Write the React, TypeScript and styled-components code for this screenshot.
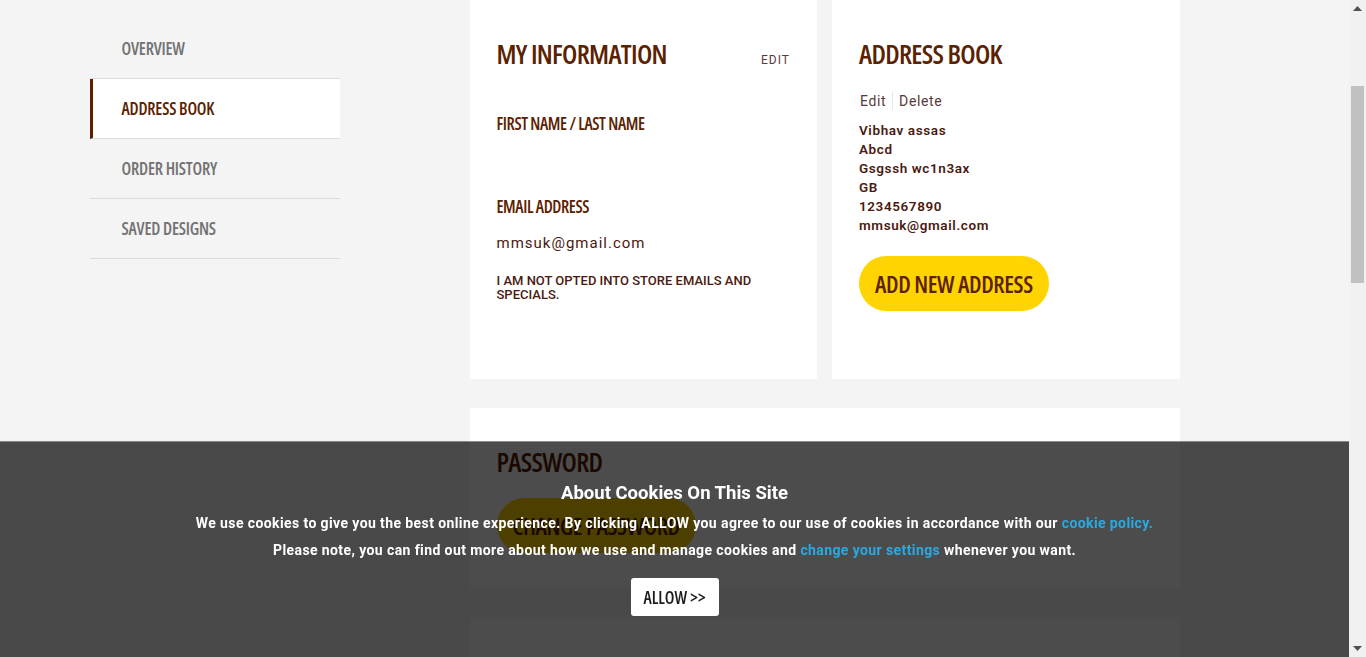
import React, { useLayoutEffect, useRef } from 'react';
import styled, { createGlobalStyle } from 'styled-components';

const brown = '#5b2100';
const deepBrown = '#4a1a10';

const GlobalStyle = createGlobalStyle`
  html, body {
    margin: 0;
    padding: 0;
    height: 100%;
    overflow: hidden;
    background: #f4f4f4;
  }
  body {
    font-family: Roboto, "Liberation Sans", sans-serif;
    color: ${deepBrown};
  }
  * { box-sizing: border-box; }
`;

const condensed = `
  font-family: "Open Sans", "Liberation Sans Narrow", sans-serif;
  font-stretch: 75%;
  text-transform: uppercase;
`;

const Shell = styled.div`
  display: flex;
  height: 100vh;
`;

const Viewport = styled.div`
  flex: 1;
  min-width: 0;
  overflow-y: scroll;
  scrollbar-width: none;
`;

const ScrollRail = styled.div`
  width: 17px;
  flex: none;
  background: #f1f1f1;
  display: flex;
  flex-direction: column;
  align-items: center;
`;

const RailArrow = styled.div`
  height: 17px;
  width: 17px;
  display: flex;
  align-items: center;
  justify-content: center;
`;

const RailTrack = styled.div`
  flex: 1;
  width: 100%;
  padding: 69px 2px 0;
`;

const RailThumb = styled.div`
  height: 197px;
  background: #c1c1c1;
`;

const Page = styled.div`
  min-height: 2078px;
  padding-top: 230px;
`;

const Container = styled.div`
  width: 1170px;
  margin: 0 auto;
  display: grid;
  grid-template-columns: 250px 710px;
  column-gap: 130px;
  align-items: start;
`;

const SideNav = styled.nav`
  margin-top: 19px;
  display: flex;
  flex-direction: column;
`;

const NavItem = styled.a<{ $active?: boolean }>`
  ${condensed}
  display: flex;
  align-items: center;
  height: 60px;
  padding-left: ${p => (p.$active ? '29px' : '32px')};
  border-bottom: 1px solid #dcdcdc;
  border-left: ${p => (p.$active ? `3px solid ${brown}` : 'none')};
  background: ${p => (p.$active ? '#fff' : 'transparent')};
  color: ${p => (p.$active ? brown : '#727272')};
  font-size: 17px;
  font-weight: 600;
  letter-spacing: -0.2px;
  text-decoration: none;
  cursor: pointer;
`;

const Main = styled.main`
  display: flex;
  flex-direction: column;
  gap: 29px;
`;

const CardRow = styled.div`
  display: grid;
  grid-template-columns: 1fr 1fr;
  gap: 15px;
`;

const Card = styled.section<{ $minHeight?: number }>`
  background: #fff;
  padding: 36px 27px 35px;
  min-height: ${p => (p.$minHeight ? `${p.$minHeight}px` : 'auto')};
`;

const CardHead = styled.div`
  display: flex;
  justify-content: space-between;
  align-items: baseline;
`;

const Title = styled.h2`
  ${condensed}
  margin: 0;
  font-size: 27px;
  line-height: 36px;
  font-weight: 600;
  letter-spacing: -0.7px;
  color: ${brown};
`;

const EditLink = styled.a`
  font-size: 12px;
  letter-spacing: 1px;
  color: #5a3a3a;
  text-transform: uppercase;
  cursor: pointer;
`;

const FieldLabel = styled.h3<{ $top: number }>`
  ${condensed}
  margin: ${p => p.$top}px 0 0;
  font-size: 17px;
  line-height: 22px;
  font-weight: 600;
  letter-spacing: -0.4px;
  color: ${brown};
`;

const FieldValue = styled.p`
  margin: 15px 0 0;
  font-size: 15px;
  line-height: 20px;
  letter-spacing: 1px;
  color: ${deepBrown};
`;

const OptNote = styled.p`
  margin: 21px 0 0;
  font-size: 13px;
  line-height: 14px;
  font-weight: 500;
  text-transform: uppercase;
  color: ${deepBrown};
`;

const ActionLinks = styled.div`
  display: flex;
  align-items: center;
  margin-top: 20px;
  font-size: 14px;
  letter-spacing: 0.6px;
  color: #5a3a3a;
`;

const ActionLink = styled.a`
  cursor: pointer;
  padding: 0 6px;
  line-height: 18px;

  &:first-child {
    padding-left: 1px;
  }
  & + & {
    border-left: 1px solid #e6e6e6;
  }
`;

const AddressLines = styled.div`
  margin-top: 11px;
  font-size: 13.5px;
  line-height: 19px;
  font-weight: 600;
  letter-spacing: 0.6px;
  color: ${deepBrown};
`;

const PillButton = styled.button<{ $top: number }>`
  ${condensed}
  margin-top: ${p => p.$top}px;
  height: 55px;
  padding: 0 16px;
  border: none;
  border-radius: 28px;
  background: #ffd400;
  color: ${brown};
  font-size: 23.5px;
  font-weight: 600;
  letter-spacing: -0.4px;
  cursor: pointer;
`;

const CookieBar = styled.div`
  position: fixed;
  left: 0;
  right: 17px;
  bottom: 0;
  height: 216px;
  background: rgba(0, 0, 0, 0.7);
  background-clip: padding-box;
  border-top: 1px solid rgba(0, 0, 0, 0.45);
  display: flex;
  flex-direction: column;
  align-items: center;
  padding-top: 39px;
  color: #fff;
  text-align: center;
`;

const CookieTitle = styled.h4`
  margin: 0 0 5px;
  font-size: 18.5px;
  line-height: 24px;
  font-weight: 700;
`;

const CookieText = styled.p`
  margin: 0;
  font-size: 14px;
  line-height: 27px;
  font-weight: 700;
  letter-spacing: 0.4px;
`;

const CookieLink = styled.a`
  color: #29a9e1;
  text-decoration: none;
`;

const AllowButton = styled.button`
  ${condensed}
  margin-top: 14px;
  width: 88px;
  height: 38px;
  border: none;
  border-radius: 3px;
  background: #fff;
  color: #1c1c1c;
  font-size: 17px;
  font-weight: 600;
  cursor: pointer;
`;

const navItems = ['Overview', 'Address Book', 'Order History', 'Saved Designs'];

const address = ['Vibhav assas', 'Abcd', 'Gsgssh wc1n3ax', 'GB', '1234567890', 'mmsuk@gmail.com'];

const Arrow = ({ down }: { down?: boolean }) => (
  <svg width="9" height="5" viewBox="0 0 9 5">
    <path d={down ? 'M0 0h9L4.5 5z' : 'M4.5 0L9 5H0z'} fill="#505050" />
  </svg>
);

export default function App() {
  const viewportRef = useRef<HTMLDivElement>(null);

  useLayoutEffect(() => {
    if (viewportRef.current) viewportRef.current.scrollTop = 230;
  }, []);

  return (
    <>
      <GlobalStyle />
      <Shell>
        <Viewport ref={viewportRef}>
          <Page>
            <Container>
              <SideNav>
                {navItems.map(item => (
                  <NavItem key={item} $active={item === 'Address Book'}>
                    {item}
                  </NavItem>
                ))}
              </SideNav>

              <Main>
                <CardRow>
                  <Card $minHeight={379}>
                    <CardHead>
                      <Title>My Information</Title>
                      <EditLink>Edit</EditLink>
                    </CardHead>
                    <FieldLabel $top={41}>First Name / Last Name</FieldLabel>
                    <FieldLabel $top={61}>Email Address</FieldLabel>
                    <FieldValue>mmsuk@gmail.com</FieldValue>
                    <OptNote>I am not opted into store emails and specials.</OptNote>
                  </Card>

                  <Card $minHeight={379}>
                    <Title>Address Book</Title>
                    <ActionLinks>
                      <ActionLink>Edit</ActionLink>
                      <ActionLink>Delete</ActionLink>
                    </ActionLinks>
                    <AddressLines>
                      {address.map(line => (
                        <div key={line}>{line}</div>
                      ))}
                    </AddressLines>
                    <PillButton $top={21}>Add New Address</PillButton>
                  </Card>
                </CardRow>

                <Card>
                  <Title>Password</Title>
                  <PillButton $top={18}>Change Password</PillButton>
                </Card>

                <Card $minHeight={320} />
              </Main>
            </Container>
          </Page>
        </Viewport>

        <ScrollRail>
          <RailArrow>
            <Arrow />
          </RailArrow>
          <RailTrack>
            <RailThumb />
          </RailTrack>
          <RailArrow>
            <Arrow down />
          </RailArrow>
        </ScrollRail>
      </Shell>

      <CookieBar>
        <CookieTitle>About Cookies On This Site</CookieTitle>
        <CookieText>
          We use cookies to give you the best online experience. By clicking ALLOW you agree to our use of cookies in
          accordance with our <CookieLink>cookie policy.</CookieLink>
        </CookieText>
        <CookieText>
          Please note, you can find out more about how we use and manage cookies and{' '}
          <CookieLink>change your settings</CookieLink> whenever you want.
        </CookieText>
        <AllowButton>Allow &gt;&gt;</AllowButton>
      </CookieBar>
    </>
  );
}
